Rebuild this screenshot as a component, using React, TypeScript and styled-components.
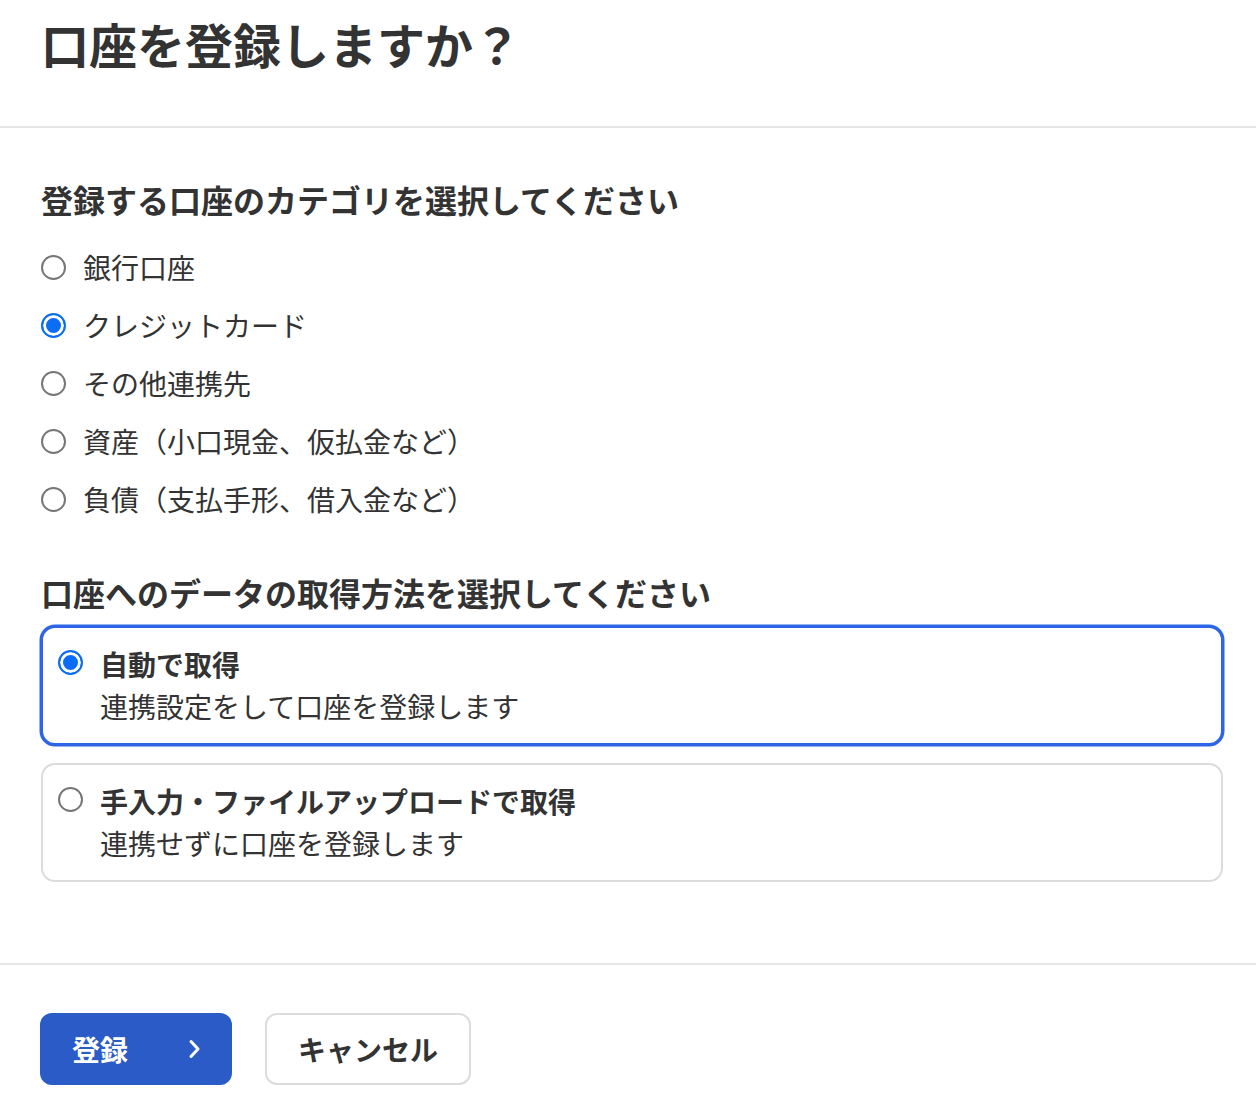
import React, { useState } from 'react';
import styled, { createGlobalStyle } from 'styled-components';

const GlobalStyle = createGlobalStyle`
  html, body {
    margin: 0;
    padding: 0;
    background: #fff;
  }
  body {
    font-family: "Noto Sans CJK JP", "Noto Sans", sans-serif;
    color: #333;
  }
  * {
    box-sizing: border-box;
  }
`;

const Page = styled.div`
  width: 1256px;
  min-height: 1116px;
  display: flex;
  flex-direction: column;
`;

const Header = styled.header`
  padding: 15px 41px 55px;
  border-bottom: 2px solid #e6e6e6;
`;

const Title = styled.h1`
  margin: 0;
  font-size: 48px;
  line-height: 56px;
  font-weight: 700;
  color: #333;
`;

const Body = styled.main`
  padding: 51px 33px 81px 41px;
  display: flex;
  flex-direction: column;
`;

const SectionHeading = styled.h2<{ $gap: number }>`
  margin: 0 0 ${({ $gap }) => $gap}px;
  font-size: 32px;
  line-height: 40px;
  font-weight: 700;
  color: #333;
`;

const RadioList = styled.div`
  display: flex;
  flex-direction: column;
  margin-bottom: 44px;
`;

const RadioRow = styled.label`
  height: 58px;
  display: flex;
  align-items: center;
  gap: 17px;
  cursor: pointer;
  font-size: 28px;
  line-height: 40px;
  color: #333;
`;

const RadioMark = styled.span<{ $checked: boolean }>`
  flex: none;
  width: 25px;
  height: 25px;
  border-radius: 50%;
  border: 2px solid ${({ $checked }) => ($checked ? '#0b6cf6' : '#767676')};
  background: ${({ $checked }) => ($checked ? '#0b6cf6' : '#fff')};
  box-shadow: ${({ $checked }) => ($checked ? 'inset 0 0 0 3px #fff' : 'none')};
`;

const CardList = styled.div`
  display: flex;
  flex-direction: column;
  gap: 18px;
`;

const Card = styled.label<{ $selected: boolean }>`
  display: flex;
  align-items: flex-start;
  gap: 17px;
  height: 119px;
  padding: 16px 20px 0 15px;
  border-radius: 14px;
  border: 2px solid ${({ $selected }) => ($selected ? '#2e65e6' : '#dcdcdc')};
  box-shadow: ${({ $selected }) => ($selected ? '0 0 0 1.5px #2e65e6' : 'none')};
  cursor: pointer;
  background: #fff;
`;

const CardRadio = styled(RadioMark)`
  margin-top: 6px;
`;

const CardText = styled.div`
  display: flex;
  flex-direction: column;
  gap: 2px;
`;

const CardTitle = styled.span`
  font-size: 28px;
  line-height: 40px;
  font-weight: 700;
  color: #333;
`;

const CardDesc = styled.span`
  font-size: 28px;
  line-height: 40px;
  color: #333;
`;

const Footer = styled.footer`
  border-top: 2px solid #e6e6e6;
  padding: 48px 41px 31px 40px;
  display: flex;
  gap: 33px;
`;

const PrimaryButton = styled.button`
  width: 192px;
  height: 72px;
  padding: 0 28px 0 32px;
  border: none;
  border-radius: 12px;
  background: #2a5bc7;
  color: #fff;
  font-family: inherit;
  font-size: 28px;
  font-weight: 700;
  display: flex;
  align-items: center;
  justify-content: space-between;
  cursor: pointer;
`;

const SecondaryButton = styled.button`
  width: 206px;
  height: 72px;
  padding: 0;
  border: 2px solid #dcdcdc;
  border-radius: 12px;
  background: #fff;
  color: #333;
  font-family: inherit;
  font-size: 28px;
  font-weight: 700;
  cursor: pointer;
`;

const categories = [
  '銀行口座',
  'クレジットカード',
  'その他連携先',
  '資産（小口現金、仮払金など）',
  '負債（支払手形、借入金など）',
];

const methods = [
  { title: '自動で取得', desc: '連携設定をして口座を登録します' },
  { title: '手入力・ファイルアップロードで取得', desc: '連携せずに口座を登録します' },
];

const Chevron = () => (
  <svg width="20" height="24" viewBox="0 0 20 24" fill="none">
    <path d="M7 4.5 L14 12 L7 19.5" stroke="#fff" strokeWidth="3" strokeLinecap="round" strokeLinejoin="round" />
  </svg>
);

export default function App() {
  const [category, setCategory] = useState(1);
  const [method, setMethod] = useState(0);

  return (
    <Page>
      <GlobalStyle />
      <Header>
        <Title>口座を登録しますか？</Title>
      </Header>

      <Body>
        <SectionHeading $gap={19}>登録する口座のカテゴリを選択してください</SectionHeading>
        <RadioList>
          {categories.map((label, i) => (
            <RadioRow key={label} onClick={() => setCategory(i)}>
              <RadioMark $checked={category === i} />
              {label}
            </RadioRow>
          ))}
        </RadioList>

        <SectionHeading $gap={14}>口座へのデータの取得方法を選択してください</SectionHeading>
        <CardList>
          {methods.map((m, i) => (
            <Card key={m.title} $selected={method === i} onClick={() => setMethod(i)}>
              <CardRadio $checked={method === i} />
              <CardText>
                <CardTitle>{m.title}</CardTitle>
                <CardDesc>{m.desc}</CardDesc>
              </CardText>
            </Card>
          ))}
        </CardList>
      </Body>

      <Footer>
        <PrimaryButton>
          登録
          <Chevron />
        </PrimaryButton>
        <SecondaryButton>キャンセル</SecondaryButton>
      </Footer>
    </Page>
  );
}
